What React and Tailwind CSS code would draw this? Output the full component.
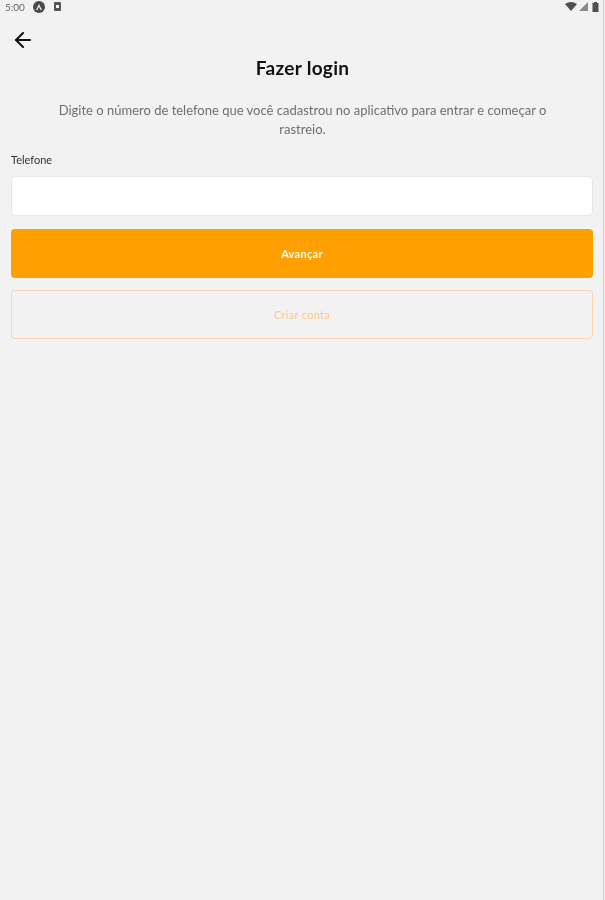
import React from 'react';
import { ArrowLeft } from 'lucide-react';

const StatusBar = () => (
  <div className="flex h-[13px] items-center justify-between pl-[5px] pr-[6px] blur-[0.4px]">
    <div className="flex items-center">
      <span className="text-[10px] leading-none text-[#666666]">5:00</span>
      <span className="ml-[8px] flex h-[12px] w-[12px] items-center justify-center rounded-full bg-[#4a4a4a]">
        <svg width="8" height="8" viewBox="0 0 8 8">
          <path d="M4 1 L7 7 H5.6 L4 3.8 L2.4 7 H1 Z" fill="#f2f2f2" />
        </svg>
      </span>
      <span className="ml-[9px] flex h-[9px] w-[7px] items-center justify-center rounded-[1px] bg-[#555555]">
        <span className="h-[3px] w-[3px] bg-[#f2f2f2]" />
      </span>
    </div>
    <div className="flex items-center gap-[2px]">
      <svg width="12" height="9" viewBox="0 0 12 9">
        <path d="M0 2 Q6 -2 12 2 L6 9 Z" fill="#4f4f4f" />
      </svg>
      <svg width="9" height="9" viewBox="0 0 9 9">
        <path d="M9 0 V9 H0 Z" fill="#8a8a8a" />
      </svg>
      <svg width="7" height="10" viewBox="0 0 7 10" className="ml-[2px]">
        <path d="M2 0 H5 V1 H6.5 V10 H0.5 V1 H2 Z" fill="#4f4f4f" />
      </svg>
    </div>
  </div>
);

export default function App() {
  return (
    <div className="relative flex h-[900px] w-[605px] flex-col overflow-hidden bg-[#f2f2f2] font-['Lato',sans-serif]">
      <StatusBar />

      {/* Header */}
      <div className="pl-[11px] pt-[15px]">
        <ArrowLeft className="h-[24px] w-[24px] text-[#111111] blur-[0.3px]" strokeWidth={2} />
      </div>
      <h1 className="mt-[4px] text-center text-[19px] font-bold leading-[24px] tracking-[0.3px] text-[#111111] blur-[0.3px]">Fazer login</h1>

      <p className="mx-auto mt-[21px] w-[500px] text-center text-[13px] leading-[19px] text-[#6f6f6f] blur-[0.4px]">
        Digite o número de telefone que você cadastrou no aplicativo para entrar e começar o rastreio.
      </p>

      {/* Form */}
      <div className="mt-[14px] flex flex-col pl-[11px] pr-[12px]">
        <label className="text-[11px] leading-[14px] text-[#333333] blur-[0.4px]">Telefone</label>
        <div className="mt-[9px] h-[40px] rounded-[4px] border border-[#e6e6e6] bg-white" />
        <button className="mt-[13px] flex h-[49px] items-center justify-center rounded-[4px] bg-[#ff9f00] pt-[2px] text-[11px] font-bold tracking-[0.3px] text-white">
          <span className="blur-[0.4px]">Avançar</span>
        </button>
        <button className="mt-[12px] flex h-[49px] items-center justify-center rounded-[4px] border border-[#fbd5ab] pt-[2px] text-[11px] tracking-[0.3px] text-[#f8c98c]">
          <span className="blur-[0.4px]">Criar conta</span>
        </button>
      </div>

      {/* Edge line on the right of the capture */}
      <div className="absolute right-[1px] top-0 h-full w-[1px] bg-[#cfcfcf]" />
    </div>
  );
}
